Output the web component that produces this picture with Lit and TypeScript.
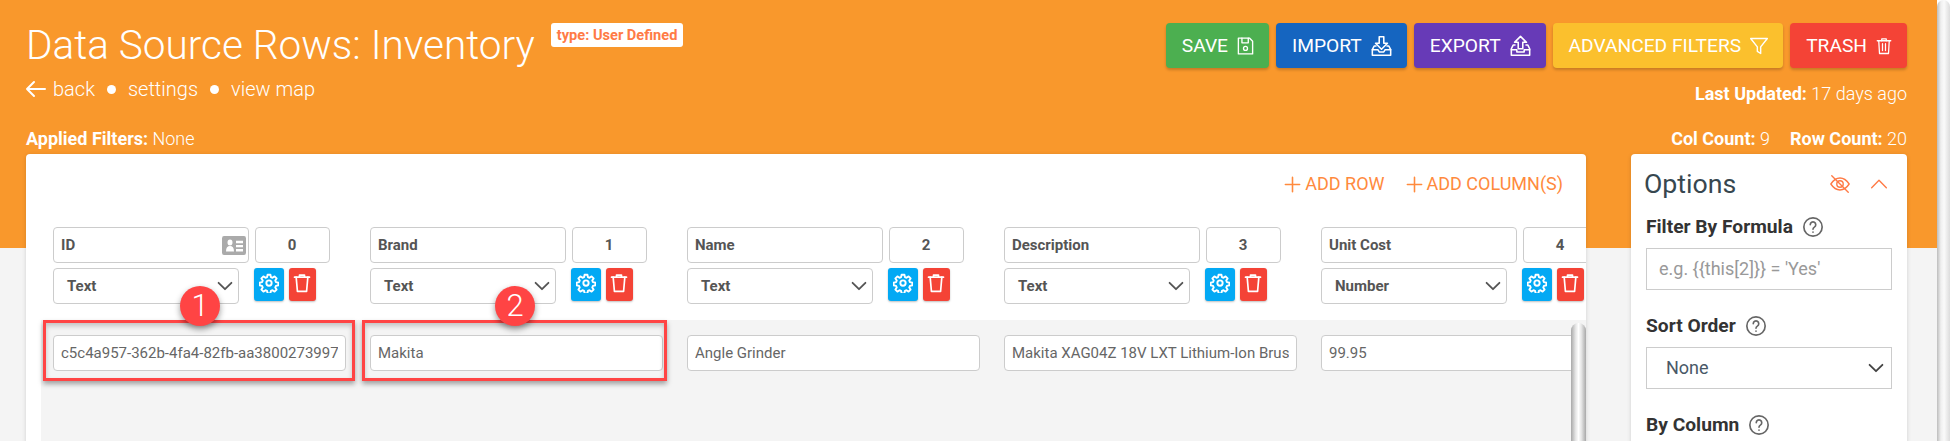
import { LitElement, html, css, svg } from "lit";
import { customElement } from "lit/decorators.js";

const icon = (body: unknown, cls = "", vb = "0 0 24 24") =>
  html`<svg class=${cls} viewBox=${vb} fill="none" stroke="currentColor" stroke-width="2" stroke-linecap="round" stroke-linejoin="round">${body}</svg>`;

const save = svg`<path d="M3 2h14l4 4v16H3z"/><path d="M7.500 2v6h8V2"/><circle cx="12" cy="15" r="2.500"/>`;
const imp = svg`<path d="M9.500 2h5v7h4L12 15.500 5.500 9h4z"/><path d="M6 12H4l-2 4v6h20v-6l-2-4h-2"/><path d="M2 16h6l1.500 2.500h5L16 16h6"/>`;
const exp = svg`<path d="M12 1.500 18.500 8h-4v7h-5V8h-4z"/><path d="M6 11H4l-2 4v7h20v-7l-2-4h-2"/><path d="M2 16h6v2.500h8V16h6"/>`;
const funnel = svg`<path d="M2 3h20l-8 10v8l-4-2.500V13z"/>`;
const trash = svg`<path d="M3 5h18"/><path d="M9 5V2.500h6V5"/><path d="M5 5l1 17h12l1-17"/><path d="M10 9v9M14 9v9"/>`;
const trashPlain = svg`<path d="M3 5h18"/><path d="M9 5V2.500h6V5"/><path d="M5 5l1.500 17h11L19 5"/>`;
const gear = svg`<circle cx="12" cy="12" r="3.200"/><path d="M10.300 2h3.400l.6 2.900 1.900.8 2.500-1.600 2.400 2.400-1.600 2.500.8 1.900 2.900.6v3.400l-2.900.6-.8 1.900 1.600 2.500-2.400 2.400-2.500-1.600-1.900.8-.6 2.900h-3.400l-.6-2.900-1.900-.8-2.500 1.600-2.400-2.400 1.600-2.500-.8-1.900-2.900-.6v-3.400l2.900-.6.8-1.900-1.600-2.500 2.400-2.400 2.500 1.600 1.900-.8z"/>`;
const chevDown = svg`<path d="M5 8.500l7 7 7-7"/>`;
const help = svg`<circle cx="12" cy="12" r="10"/><path d="M9 9.500a3 3 0 1 1 4.500 2.600c-1 .6-1.500 1.100-1.500 2.400"/><path d="M12 17.500v.1"/>`;
const plus = svg`<path d="M12 3v18M3 12h18"/>`;

const columns = [
  { name: "ID", type: "Text", value: "c5c4a957-362b-4fa4-82fb-aa3800273997", idIcon: true },
  { name: "Brand", type: "Text", value: "Makita" },
  { name: "Name", type: "Text", value: "Angle Grinder" },
  { name: "Description", type: "Text", value: "Makita XAG04Z 18V LXT Lithium-Ion Brushless" },
  { name: "Unit Cost", type: "Number", value: "99.95" },
];

@customElement("app-root")
export class AppRoot extends LitElement {
  static styles = css`
    :host { display: flex; height: 441px; overflow: hidden; font-family: Roboto, sans-serif; color: #333; }
    * { box-sizing: border-box; }
    svg { display: block; flex: none; }
    .main { flex: 1; min-width: 0; height: 441px; overflow: hidden; padding: 23px 30px 0 26px;
      background: linear-gradient(#f9982c 248px, #f4f4f4 248px); color: #fff; }
    .pagebar { width: 13px; height: 441px; background: linear-gradient(90deg, #bdbdbd, #efefef 30%, #fafafa 55%, #dcdcdc); border-radius: 7px 7px 0 0; }
    .top { display: flex; justify-content: space-between; height: 85px; }
    .titlerow { display: flex; align-items: flex-start; margin-top: -1px; }
    h1 { margin: 0; font-size: 40.500px; font-weight: 300; line-height: 47px; white-space: nowrap; }
    .badge { margin: 1px 0 0 16px; height: 24px; padding: 0 6px; line-height: 24px; background: #fff; color: #ff7a45; border-radius: 3px; font-size: 14.600px; font-weight: 700; white-space: nowrap; }
    .links { display: flex; align-items: center; margin-top: 7px; font-size: 20px; font-weight: 300; line-height: 26px; height: 26px; }
    .links .arrow { width: 24px; height: 24px; margin: 0 5.500px 0 -2.500px; }
    .dot { width: 9px; height: 9px; border-radius: 50%; background: #fff; margin: 0 12px; }
    .right { display: flex; flex-direction: column; align-items: flex-end; }
    .buttons { display: flex; gap: 7px; }
    .btn { display: flex; align-items: center; gap: 8px; height: 45px; padding: 0 14px 0 16px; font-size: 19.200px; color: #fff; border-radius: 4px; box-shadow: 0 2px 3px rgba(0,0,0,.2); white-space: nowrap; }
    .btn svg { height: 22px; stroke-width: 1.700; }
    .w19 { width: 19px; } .w23 { width: 23px; } .w20 { width: 20px; } .w18 { width: 18px; }
    .green { background: #4caf50; } .blue { background: #1565c0; } .purple { background: #673ab7; }
    .yellow { background: #fbc02d; } .red { background: #f44336; }
    .updated { margin-top: 15px; font-size: 18px; font-weight: 300; line-height: 22px; }
    b { font-weight: 700; }
    .meta { display: flex; justify-content: space-between; height: 46px; padding-top: 20px; font-size: 18px; font-weight: 300; line-height: 22px; }
    .counts { display: flex; gap: 20px; }
    .content { display: flex; justify-content: space-between; align-items: flex-start; }
    .card { position: relative; width: 1560px; height: 400px; background: #fff; border-radius: 4px; box-shadow: 0 1px 4px rgba(0,0,0,.15); overflow: hidden; color: #555; }
    .actions { display: flex; justify-content: flex-end; align-items: flex-start; gap: 20px; height: 73px; padding: 18px 23px 0 0; color: #ff8a3d; font-size: 18px; line-height: 24px; }
    .action { display: flex; align-items: center; gap: 3px; }
    .action svg { width: 19px; height: 19px; stroke-width: 2; }
    .heads { display: flex; gap: 16px; padding-left: 27px; height: 93px; }
    .head { width: 301px; flex: none; display: grid; grid-template-columns: 196px 75px; column-gap: 5.500px; row-gap: 5px; grid-template-rows: 36px 36px; }
    .field { height: 36px; border: 1px solid #ccc; border-radius: 4px; background: #fff; padding: 0 7px; font-size: 15px; line-height: 34px; color: #555; white-space: nowrap; overflow: hidden; }
    .name { font-weight: 700; display: flex; align-items: center; justify-content: space-between; padding-right: 2.500px; }
    .name svg { width: 24px; height: 19px; color: #aaa; }
    .num { font-weight: 700; text-align: center; }
    .sel { width: 186px; padding: 0 2.500px 0 13px; display: flex; align-items: center; justify-content: space-between; font-weight: 700; }
    .sel svg { width: 22px; height: 22px; color: #555; }
    .tools { display: flex; gap: 5px; margin-left: -1px; }
    .tool { height: 33px; border-radius: 3px; color: #fff; display: flex; align-items: center; justify-content: center; padding-bottom: 3px; box-shadow: 0 1px 2px rgba(0,0,0,.25); }
    .tool.g { width: 30px; background: #03a9f4; } .tool.t { width: 27px; background: #f44336; }
    .tool.g svg { width: 20px; height: 20px; stroke-width: 2.300; }
    .tool.t svg { width: 20px; height: 20px; }
    .rows { position: relative; margin-left: 15px; height: 200px; background: #f4f4f4; display: flex; gap: 24.500px; padding: 15px 0 0 12px; }
    .cell { width: 292.500px; flex: none; font-weight: 400; color: #666; }
    .cell span { display: block; overflow: hidden; }
    .cellscroll { position: absolute; right: 0; top: 3px; bottom: 0; width: 15px; border-radius: 8px 8px 0 0; background: linear-gradient(90deg, #a8a8a8, #e4e4e4 30%, #fff 50%, #e4e4e4 70%, #a8a8a8); }
    .callout { position: absolute; top: 166px; height: 61px; border: 3px solid #ff4444; box-shadow: 0 3px 5px rgba(0,0,0,.35), inset 0 3px 5px rgba(0,0,0,.2); }
    .pin { position: absolute; top: 132px; width: 40px; height: 40px; border-radius: 50%; background: #ff4444; color: #fff; font-size: 31px; font-weight: 300; line-height: 40px; text-align: center; box-shadow: 0 3px 6px rgba(0,0,0,.4); }
    .options { width: 276px; height: 400px; background: #fff; border-radius: 4px; box-shadow: 0 1px 4px rgba(0,0,0,.15); padding: 0 15px; color: #333; }
    .ohead { display: flex; align-items: center; height: 60px; margin: 0 2px 1px -2px; }
    .ohead h2 { margin: 0; flex: 1; font-size: 26.700px; font-weight: 400; line-height: 60px; color: #37474f; }
    .ohead svg { color: #ff7a45; stroke-width: 1.500; width: 22px; height: 22px; }
    .ohead svg + svg { margin-left: 17px; }
    .label { display: flex; align-items: center; gap: 9px; font-size: 19.200px; font-weight: 700; line-height: 24px; height: 24px; color: #333; }
    .label svg { width: 22px; height: 22px; color: #666; stroke-width: 1.800; }
    .box { margin: 9px 0 0 0; width: 246px; height: 42px; border: 1px solid #ccc; font-size: 18px; line-height: 40px; padding: 0 12px; color: #999; white-space: nowrap; }
    .box.select { display: flex; align-items: center; justify-content: space-between; padding: 0 4px 0 19px; color: #495867; }
    .box.select svg { width: 22px; height: 22px; color: #444; }
    .gap { height: 24px; }
  `;

  render() {
    return html`
      <div class="main">
        <div class="top">
          <div class="left">
            <div class="titlerow"><h1>Data Source Rows: Inventory</h1><span class="badge">type: User Defined</span></div>
            <div class="links">
              ${icon(svg`<path d="M21 12H3M10 5l-7 7 7 7"/>`, "arrow")}
              <span>back</span><i class="dot"></i><span>settings</span><i class="dot"></i><span>view map</span>
            </div>
          </div>
          <div class="right">
            <div class="buttons">
              <div class="btn green">SAVE ${icon(save, "w19")}</div>
              <div class="btn blue">IMPORT ${icon(imp, "w23")}</div>
              <div class="btn purple">EXPORT ${icon(exp, "w23")}</div>
              <div class="btn yellow">ADVANCED FILTERS ${icon(funnel, "w20")}</div>
              <div class="btn red">TRASH ${icon(trash, "w18")}</div>
            </div>
            <div class="updated"><b>Last Updated:</b> 17 days ago</div>
          </div>
        </div>
        <div class="meta">
          <div><b>Applied Filters:</b> None</div>
          <div class="counts"><span><b>Col Count:</b> 9</span><span><b>Row Count:</b> 20</span></div>
        </div>
        <div class="content">
          <div class="card">
            <div class="actions">
              <div class="action">${icon(plus)} ADD ROW</div>
              <div class="action">${icon(plus)} ADD COLUMN(S)</div>
            </div>
            <div class="heads">
              ${columns.map((c, i) => html`
                <div class="head">
                  <div class="field name"><span>${c.name}</span>${c.idIcon ? html`<svg viewBox="0 4 24 16" preserveAspectRatio="none"><path fill="currentColor" fill-rule="evenodd" d="M2 4h20a2 2 0 0 1 2 2v12a2 2 0 0 1-2 2H2a2 2 0 0 1-2-2V6a2 2 0 0 1 2-2zm6 3a2.500 2.500 0 1 0 0 5 2.500 2.500 0 0 0 0-5zm-4 10h8c0-3-1.500-4.500-4-4.500S4 14 4 17zM14 8v2h7V8zm0 3.500v2h7v-2zm0 3.500v2h7v-2z"/></svg>` : ""}</div>
                  <div class="field num">${i}</div>
                  <div class="field sel"><span>${c.type}</span>${icon(chevDown)}</div>
                  <div class="tools">
                    <div class="tool g">${icon(gear)}</div>
                    <div class="tool t">${icon(trashPlain)}</div>
                  </div>
                </div>`)}
            </div>
            <div class="rows">
              ${columns.map((c) => html`<div class="field cell"><span>${c.value}</span></div>`)}
              <div class="cellscroll"></div>
            </div>
            <div class="callout" style="left:17px;width:312px"></div>
            <div class="callout" style="left:336px;width:305px"></div>
            <div class="pin" style="left:154px">1</div>
            <div class="pin" style="left:469px">2</div>
          </div>
          <div class="options">
            <div class="ohead">
              <h2>Options</h2>
              ${icon(svg`<path d="M2 12c3-4.500 6.500-6.500 10-6.500s7 2 10 6.500c-3 4.500-6.500 6.500-10 6.500S5 16.500 2 12z"/><circle cx="12" cy="12" r="3.500"/><path d="M3 3l18 18"/>`)}
              ${icon(svg`<path d="M4 16l8-8 8 8"/>`)}
            </div>
            <div class="label">Filter By Formula ${icon(help)}</div>
            <div class="box">e.g. {{this[2]}} = 'Yes'</div>
            <div class="gap"></div>
            <div class="label">Sort Order ${icon(help)}</div>
            <div class="box select"><span>None</span>${icon(chevDown)}</div>
            <div class="gap"></div>
            <div class="label">By Column ${icon(help)}</div>
          </div>
        </div>
      </div>
      <div class="pagebar"></div>
    `;
  }
}
